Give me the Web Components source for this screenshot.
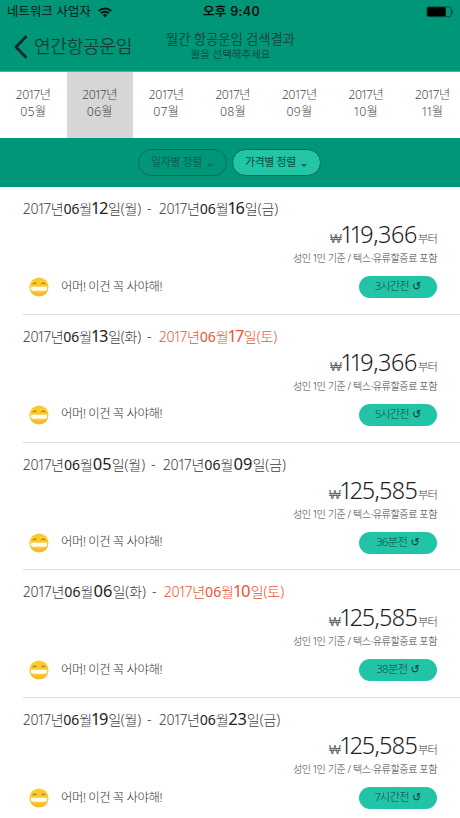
<!DOCTYPE html>
<html lang="ko"><head><meta charset="utf-8"><title>연간항공운임</title>
<style>
html,body{margin:0;height:818px;overflow:hidden;background:#fff}
body{font-family:"Noto Sans","Noto Sans CJK KR",sans-serif;font-weight:300;font-variant-numeric:proportional-nums;color:#444}
</style></head><body>
<fare-app></fare-app>
<script>
// Single-line text whose tracking is adjusted to occupy a given width.
class FitText extends HTMLElement{
  connectedCallback(){
    this.attachShadow({mode:'open'}).innerHTML='<style>:host{display:inline-block;white-space:pre;flex:none}b{font-weight:400;color:var(--strong,inherit)}b.day{font-size:1.17em}</style><slot></slot>';
    const text=this.getAttribute('text');
    if(text){const d=document.createElement('span');d.innerHTML=text;this.shadowRoot.querySelector('slot').replaceWith(d)}
    const w=+this.getAttribute('w');
    const n=(text?this.shadowRoot.querySelector('span'):this).textContent.length;
    const gap=(w-this.getBoundingClientRect().width)/n;
    this.style.letterSpacing=gap+'px';
    this.style.width=w+'px';
  }
}
class StatusBar extends HTMLElement{
  connectedCallback(){this.attachShadow({mode:'open'}).innerHTML=`<style>
  :host{display:grid;grid-template-columns:1fr auto 1fr;align-items:center;height:24px;padding:0 6px 0 7px;box-sizing:border-box;color:#05110e;font-size:12.3px;font-weight:400;line-height:24px}
  .l{display:flex;align-items:center;gap:7px}.r{justify-self:end;display:flex}.t{font:600 12.5px/24px Inter,"Noto Sans CJK KR",sans-serif;margin-left:2px}</style>
  <div class="l"><fit-text w="84">네트워크 사업자</fit-text><svg width="14" height="11" viewBox="0 0 14 11"><g fill="none" stroke="#05110e" stroke-width="1.9"><path d="M.8 4A8.8 8.8 0 0 1 13.2 4"/><path d="M3.1 6.4a5.5 5.5 0 0 1 7.8 0"/></g><path d="M4.8 8.1a3.2 3.2 0 0 1 4.4 0L7 10.4z" fill="#05110e"/></svg></div>
  <fit-text class="t" w="57">오후 9:40</fit-text>
  <div class="r"><svg width="28" height="12" viewBox="0 0 28 12"><rect x=".9" y=".9" width="24.4" height="9.8" rx="1.8" fill="none" stroke="#043c30" stroke-width=".8"/><rect x="1.3" y="1.3" width="18.4" height="9" rx="1" fill="#000"/><path d="M26.3 4q1.6 1.8 0 3.6z" fill="#000"/></svg></div>`}
}
class TitleBar extends HTMLElement{
  connectedCallback(){this.attachShadow({mode:'open'}).innerHTML=`<style>
  :host{display:grid;grid-template-columns:166px auto 1fr;height:47px;color:#173f36;font-weight:350}
  .b{display:flex;align-items:center;gap:6px;padding-left:14px;font-size:18.2px;line-height:24px;height:46px}
  .c{display:flex;flex-direction:column;align-items:center;padding-top:6px}.h{font-size:13.4px;line-height:18px}.s{font-size:10.5px;line-height:13px}</style>
  <div class="b"><svg width="14" height="24" viewBox="0 0 14 24"><path d="M12.4 1.3 2 12l10.4 10.7" fill="none" stroke="#172824" stroke-width="2.8"/></svg><fit-text w="98" style="margin-top:-2px">연간항공운임</fit-text></div>
  <div class="c"><fit-text class="h" w="129">월간 항공운임 검색결과</fit-text><fit-text class="s" w="80">월을 선택해주세요</fit-text></div>`}
}
class MonthTabs extends HTMLElement{
  connectedCallback(){this.attachShadow({mode:'open'}).innerHTML=`<style>
  :host{display:grid;grid-template-columns:repeat(7,66.55px);height:67px;background:#fff;border-top:1px solid #4baf99;box-sizing:border-box;overflow:hidden;color:#484848}
  div{display:flex;flex-direction:column;align-items:center;padding-top:14px;font-size:12.2px;line-height:17.4px}.on{background:#d6d6d6}</style>`+
  ['05','06','07','08','09','10','11'].map(m=>`<div class="${m=='06'?'on':''}"><fit-text w="35">2017년</fit-text><fit-text w="${m[0]=='1'?(m=='11'?21:24):26}">${m}월</fit-text></div>`).join('')}
}
class SortPill extends HTMLElement{
  connectedCallback(){this.attachShadow({mode:'open'}).innerHTML=`<style>
  :host{display:flex;box-sizing:border-box;width:89px;height:27px;border:1px solid #08695a;border-radius:14px;align-items:center;justify-content:center;gap:5px;font-size:10.8px;line-height:22px;padding-bottom:1px;font-weight:400;color:#075f4e}
  :host([active]){background:#23c5a7;color:#0c4a3e}</style>
  <fit-text w="51">${this.getAttribute('label')}</fit-text><svg width="6" height="5" viewBox="0 0 6 5" style="margin-top:6px"><path d="m.8 1 2.2 2L5.2 1" fill="none" stroke="currentColor" stroke-width="1.2"/></svg>`}
}
class SmileIcon extends HTMLElement{
  connectedCallback(){this.attachShadow({mode:'open'}).innerHTML=`<style>:host{display:block;width:20px;height:20px}svg{display:block}</style>
  <svg width="20" height="20" viewBox="0 0 20 20"><circle cx="10" cy="10" r="9.6" fill="#fcca2b"/><path d="M1.3 13.5a9.6 9.6 0 0 0 17.4 0Q10 19 1.3 13.5" fill="#f7bb27"/><path d="M3.8 7q1.8-2.3 3.6-.1M12.6 6.9q1.8-2.2 3.6.1" fill="none" stroke="#79602b" stroke-width="1"/><path d="M2 9.4q8 .8 16 0v3.2q0 1.2-1.4 1.2H3.4Q2 13.8 2 12.6z" fill="#fffdf5"/></svg>`}
}
class FareRow extends HTMLElement{
  connectedCallback(){
    const [d1,w1,d2,w2,price,pw,ago,aw,wkend]=this.data;
    const date=([d,y])=>`2017년<b>06</b>월<b class='day'>${d}</b>일(${y})`;
    this.attachShadow({mode:'open'}).innerHTML=`<style>
    :host{display:flex;flex-direction:column;box-sizing:border-box;height:127.75px;margin-left:23px;padding:10px 23px 0 0;border-bottom:1px solid #dedede}
    .d{display:flex;align-items:baseline;height:24px;line-height:22px;font-size:14px;--strong:#222;color:#3c3c3c}
    .w{color:#ea5430;--strong:#ea5430}.dash{margin:0 5px 0 6px;position:relative;top:-1px}
    .p{display:flex;justify-content:flex-end;align-items:baseline;height:27px;line-height:26px;gap:1px;color:#444;font-size:11.3px}
    .n{font-size:23.5px;color:#1c1c1c}.won{font-family:"Liberation Sans",sans-serif;font-size:12.5px;color:#666}
    .s{display:flex;justify-content:flex-end;height:20px;line-height:20px;font-size:10.1px;color:#3c3c3c}
    .f{display:flex;align-items:center;height:22px;margin-top:8px;padding-left:6px}
    .m{font-size:12.4px;margin-left:12px;line-height:20px;margin-top:-1px;color:#333}
    .a{margin-left:auto;width:78px;height:22px;border-radius:11px;background:#22c4a7;display:flex;align-items:center;justify-content:center;gap:3px;font-size:11.3px;line-height:20px;color:#124b40}
    .a fit-text{margin-top:-2px}.r{font:400 11px/20px "DejaVu Sans",sans-serif;color:#12352e;margin-top:0}</style>
    <div class="d"><fit-text w="${w1}" text="${date(d1)}"></fit-text><fit-text class="dash" w="7">-</fit-text><fit-text class="${wkend?'w':''}" w="${w2}" text="${date(d2)}"></fit-text></div>
    <div class="p"><fit-text class="won" w="11">₩</fit-text><fit-text class="n" w="${pw}">${price}</fit-text><fit-text w="19">부터</fit-text></div>
    <div class="s"><fit-text w="144">성인 1인 기준 / 텍스·유류할증료 포함</fit-text></div>
    <div class="f"><smile-icon></smile-icon><fit-text class="m" w="101">어머! 이건 꼭 사야해!</fit-text><div class="a"><fit-text w="${aw}">${ago}</fit-text><span class="r">↺</span></div></div>`}
}
class FareApp extends HTMLElement{
  connectedCallback(){
    const r=this.attachShadow({mode:'open'});
    r.innerHTML=`<style>:host{display:block;height:818px;overflow:hidden}.g{background:#009779}.sort{display:flex;justify-content:center;gap:5px;height:49px;padding:11px 2px 0 0;box-sizing:border-box}</style>
    <header class="g"><status-bar></status-bar><title-bar></title-bar></header><month-tabs></month-tabs>
    <div class="sort g"><sort-pill label="일자별 정렬"></sort-pill><sort-pill active label="가격별 정렬"></sort-pill></div><main></main>`;
    for(const d of [
      [['12','월'],118,['16','금'],119,'119,366',75,'3시간전',34],
      [['13','화'],118,['17','토'],118,'119,366',75,'5시간전',34,1],
      [['05','월'],122,['09','금'],123,'125,585',76,'36분전',31],
      [['06','화'],123,['10','토'],120,'125,585',76,'38분전',31,1],
      [['19','월'],118,['23','금'],121,'125,585',76,'7시간전',34]]){
      const e=document.createElement('fare-row');e.data=d;r.querySelector('main').append(e)}
  }
}
for(const [n,c] of Object.entries({'fit-text':FitText,'status-bar':StatusBar,'title-bar':TitleBar,'month-tabs':MonthTabs,'sort-pill':SortPill,'smile-icon':SmileIcon,'fare-row':FareRow,'fare-app':FareApp}))customElements.define(n,c);
</script></body></html>
